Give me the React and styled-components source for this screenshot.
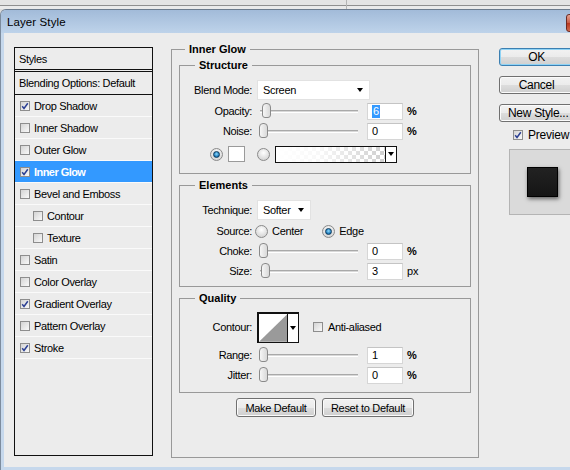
import React from 'react'
import styled, { createGlobalStyle } from 'styled-components'

const GlobalStyle = createGlobalStyle`
  html, body {
    margin: 0;
    padding: 0;
    background: #dcdcdc;
  }
  body {
    font-family: "Liberation Sans", Arial, sans-serif;
    font-size: 11px;
    color: #000;
  }
  * { box-sizing: border-box; }
`

const Page = styled.div`
  width: 570px;
  height: 470px;
  overflow: hidden;
  background: #dcdcdc;
`

const Backdrop = styled.div`
  height: 9px;
  background: linear-gradient(#e4e4e4 0, #e4e4e4 5px, #8f8f8f 5px, #8f8f8f 6px, #eaeaea 6px);
  display: flex;
`

const BackdropSplit = styled.div`
  width: 347px;
  border-right: 1px solid #b5b5b5;
`

const Window = styled.div`
  width: 610px;
  border-top: 1px solid #6c7b8d;
  border-left: 1px solid #7d8c9e;
  border-top-left-radius: 6px;
  overflow: hidden;
  background: #c6d8ec;
`

const TitleBar = styled.div`
  height: 23px;
  display: flex;
  align-items: center;
  justify-content: space-between;
  padding-left: 6px;
  background: linear-gradient(#a2bbd9, #bed3ea);
`

const Title = styled.span`
  font-size: 11.5px;
  color: #000;
  letter-spacing: 0.1px;
`

const CloseButton = styled.div`
  width: 43px;
  height: 18px;
  margin-right: 1px;
  margin-top: 2px;
  border: 1px solid #6d2a22;
  border-radius: 3px;
  background: linear-gradient(#e8a493, #c75a44 50%, #b8361f 51%, #d16b4e);
`

const Body = styled.div`
  height: 434px;
  margin-left: 3px;
  padding-left: 10px;
  display: flex;
  align-items: flex-start;
  background: #ececec;
`

const BottomEdge = styled.div`
  height: 3px;
  background: #c6d8ec;
`

/* ---------- left style list ---------- */

const StyleList = styled.div`
  margin-top: 14px;
  width: 139px;
  height: 409px;
  border: 1px solid #111;
  flex: none;
`

const HeadRow = styled.div`
  height: ${p => (p.$double ? 24 : 23)}px;
  padding-left: 4px;
  display: flex;
  align-items: center;
  border-bottom: ${p => (p.$double ? '3px double #111' : '1px solid #111')};
  letter-spacing: -0.35px;
`

const ListRow = styled.div`
  height: 22px;
  padding-left: ${p => (p.$indent ? 18 : 5)}px;
  display: flex;
  align-items: center;
  gap: 4px;
  border-bottom: 1px solid #fafafa;
  background: ${p => (p.$active ? '#3399ff' : 'transparent')};
  color: ${p => (p.$active ? '#fff' : '#000')};
  font-weight: ${p => (p.$active ? 'bold' : 'normal')};
  letter-spacing: ${p => (p.$active ? '-0.55px' : '-0.35px')};
`

const Box = styled.span`
  width: 10px;
  height: 10px;
  flex: none;
  border: 1px solid #8d8d8d;
  background: linear-gradient(135deg, #d4d4d4, #f9f9f9);
  display: flex;
  align-items: center;
  justify-content: center;
`

const Checkbox = ({ checked }) => (
  <Box>
    {checked && (
      <svg width="8" height="8" viewBox="0 0 8 8">
        <path d="M1.2 4.2 L3 6.4 L6.8 1.2" fill="none" stroke="#2b3f93" strokeWidth="1.5" />
      </svg>
    )}
  </Box>
)

/* ---------- fieldsets ---------- */

const Group = styled.fieldset`
  margin: 0;
  min-width: 0;
  border: 1px solid #999;
  padding: ${p => p.$pad};
  height: ${p => (p.$height ? `${p.$height}px` : 'auto')};
`

const Legend = styled.legend`
  padding: 0 4px;
  margin-left: ${p => p.$indent}px;
  line-height: 13px;
  font-weight: bold;
`

const MainGroup = styled(Group)`
  margin-top: 10px;
  margin-left: 18px;
  width: 308px;
  flex: none;
`

const SubGroup = styled(Group)`
  margin-top: ${p => p.$top}px;
`

const Row = styled.div`
  height: ${p => p.$h}px;
  display: grid;
  grid-template-columns: 72px auto;
  column-gap: 5px;
  align-items: center;
`

const Label = styled.span`
  text-align: right;
  letter-spacing: -0.35px;
`

const Controls = styled.div`
  display: flex;
  align-items: center;
  margin-left: ${p => p.$shift || 0}px;
`

const FreeRow = styled.div`
  height: ${p => p.$h}px;
  padding-left: 30px;
  display: flex;
  align-items: center;
`

const Select = styled.div`
  width: ${p => p.$w}px;
  height: 20px;
  padding: 0 6px 0 5px;
  background: #fff;
  border: 1px solid #e2e2e2;
  display: flex;
  align-items: center;
  justify-content: space-between;
  letter-spacing: -0.3px;
`

const Arrow = styled.span`
  width: 0;
  height: 0;
  border-left: 3.5px solid transparent;
  border-right: 3.5px solid transparent;
  border-top: 4px solid #000;
`

const Track = styled.div`
  position: relative;
  width: 98px;
  height: 3px;
  margin-left: 3px;
  border-top: 1px solid #a9a9a9;
  border-bottom: 1px solid #fff;
  background: #d8d8d8;
`

const Thumb = styled.span`
  position: absolute;
  top: -8px;
  width: 9px;
  height: 15px;
  border: 1px solid #8a8a8a;
  border-radius: 4px 4px 3px 3px;
  background: linear-gradient(90deg, #f6f6f6, #d9d9d9);
`

const Slider = ({ at }) => (
  <Track>
    <Thumb style={{ left: at }} />
  </Track>
)

const Field = styled.div`
  width: 36px;
  height: 17px;
  margin-left: 9px;
  padding-left: 4px;
  background: #fff;
  border: 1px solid #d6d6d6;
  border-top-color: #c4c4c4;
  display: flex;
  align-items: center;
`

const Picked = styled.span`
  background: #3399ff;
  color: #fff;
  padding: 0 1px;
  line-height: 13px;
`

const Unit = styled.span`
  margin-left: 4px;
  font-weight: ${p => (p.$bold ? 'bold' : 'normal')};
`

const RadioRing = styled.span`
  width: 13px;
  height: 13px;
  flex: none;
  border-radius: 50%;
  border: 1px solid #8a8a8a;
  background: radial-gradient(circle at 50% 35%, #ffffff, #d5d5d5 80%);
  display: flex;
  align-items: center;
  justify-content: center;
`

const RadioDot = styled.span`
  width: 7px;
  height: 7px;
  border-radius: 50%;
  border: 1px solid #0c3a5c;
  background: radial-gradient(circle at 50% 40%, #8fdcff, #1673b4 70%);
`

const Radio = ({ on }) => <RadioRing>{on && <RadioDot />}</RadioRing>

const RadioText = styled.span`
  margin-left: 4px;
  margin-right: ${p => p.$gap || 0}px;
  letter-spacing: -0.3px;
`

const Swatch = styled.span`
  width: 17px;
  height: 16px;
  margin: 0 12px 0 5px;
  background: #fff;
  border: 1px solid #9a9a9a;
`

const GradientPicker = styled.div`
  width: 122px;
  height: 17px;
  margin-left: 5px;
  border: 1px solid #111;
  display: flex;
`

const GradientFill = styled.div`
  flex: 1;
  background:
    linear-gradient(90deg, #fff 0%, rgba(255, 255, 255, 0.85) 40%, rgba(255, 255, 255, 0) 100%),
    repeating-conic-gradient(#cfcfcf 0 25%, #fff 0 50%) 0 0 / 8px 8px;
`

const ArrowCell = styled.div`
  width: 11px;
  border-left: 1px solid #111;
  background: #fff;
  display: flex;
  align-items: center;
  justify-content: center;
`

const ContourPicker = styled.div`
  width: 42px;
  height: 31px;
  border: 1px solid #111;
  border-top-width: 2px;
  border-left-width: 2px;
  display: flex;
  background: #fff;
`

const CheckLabel = styled.label`
  display: flex;
  align-items: center;
  gap: 5px;
  margin-left: 14px;
  letter-spacing: -0.35px;
`

const ButtonRow = styled.div`
  margin-top: 5px;
  display: flex;
  justify-content: center;
  gap: 6px;
`

const Button = styled.div`
  width: ${p => p.$w}px;
  height: ${p => p.$h || 19}px;
  border: 1px solid ${p => (p.$focus ? '#3c7fb1' : '#707070')};
  border-radius: 3px;
  background: linear-gradient(#f2f2f2, #ebebeb 50%, #dddddd 51%, #cfcfcf);
  box-shadow: ${p => (p.$focus ? 'inset 0 0 0 1px #8fd3f5' : 'inset 0 0 0 1px #fbfbfb')};
  display: flex;
  align-items: center;
  justify-content: ${p => (p.$left ? 'flex-start' : 'center')};
  padding-left: ${p => (p.$left ? 8 : 0)}px;
  font-size: ${p => p.$size || 11}px;
  letter-spacing: -0.3px;
  white-space: nowrap;
`

/* ---------- right column ---------- */

const Actions = styled.div`
  margin-top: 15px;
  margin-left: 20px;
  display: flex;
  flex-direction: column;
  gap: 10px;
  flex: none;
`

const PreviewToggle = styled.label`
  display: flex;
  align-items: center;
  gap: 5px;
  margin: -4px 0 0 14px;
  font-size: 12px;
  letter-spacing: -0.2px;
`

const PreviewBox = styled.div`
  width: 80px;
  height: 66px;
  margin-left: 10px;
  margin-top: -3px;
  border: 1px solid #b4b4b4;
  background: #dadada;
  padding: 17px 0 0 17px;
`

const PreviewSwatch = styled.div`
  width: 31px;
  height: 30px;
  border: 1px solid #000;
  background: linear-gradient(#222, #151515);
  box-shadow: 1px 2px 4px rgba(0, 0, 0, 0.55);
`

const styleItems = [
  { name: 'Drop Shadow', checked: true },
  { name: 'Inner Shadow' },
  { name: 'Outer Glow' },
  { name: 'Inner Glow', checked: true, active: true },
  { name: 'Bevel and Emboss' },
  { name: 'Contour', indent: true },
  { name: 'Texture', indent: true },
  { name: 'Satin' },
  { name: 'Color Overlay' },
  { name: 'Gradient Overlay', checked: true },
  { name: 'Pattern Overlay' },
  { name: 'Stroke', checked: true },
]

const SliderRow = ({ label, at, value, unit, picked }) => (
  <Row $h={20}>
    <Label>{label}</Label>
    <Controls>
      <Slider at={at} />
      <Field>{picked ? <Picked>{value}</Picked> : value}</Field>
      <Unit $bold={unit === '%'}>{unit}</Unit>
    </Controls>
  </Row>
)

const App = () => {
  return (
    <Page>
      <GlobalStyle />
      <Backdrop>
        <BackdropSplit />
      </Backdrop>
      <Window>
        <TitleBar>
          <Title>Layer Style</Title>
          <CloseButton />
        </TitleBar>
        <Body>
          <StyleList>
            <HeadRow $double>Styles</HeadRow>
            <HeadRow>Blending Options: Default</HeadRow>
            {styleItems.map(item => (
              <ListRow key={item.name} $indent={item.indent} $active={item.active}>
                <Checkbox checked={item.checked} />
                {item.name}
              </ListRow>
            ))}
          </StyleList>

          <MainGroup $pad="3px 7px 0 7px" $height={415}>
            <Legend $indent={6}>Inner Glow</Legend>

            <SubGroup $pad="7px 0 6px 0" $top={0}>
              <Legend $indent={15}>Structure</Legend>
              <Row $h={22}>
                <Label>Blend Mode:</Label>
                <Select $w={113}>
                  Screen
                  <Arrow />
                </Select>
              </Row>
              <SliderRow label="Opacity:" at={2} value="6" unit="%" picked />
              <SliderRow label="Noise:" at={-1} value="0" unit="%" />
              <FreeRow $h={26}>
                <Radio on />
                <Swatch />
                <Radio />
                <GradientPicker>
                  <GradientFill />
                  <ArrowCell>
                    <Arrow />
                  </ArrowCell>
                </GradientPicker>
              </FreeRow>
            </SubGroup>

            <SubGroup $pad="7px 0 5px 0" $top={5}>
              <Legend $indent={15}>Elements</Legend>
              <Row $h={22}>
                <Label>Technique:</Label>
                <Select $w={54}>
                  Softer
                  <Arrow />
                </Select>
              </Row>
              <Row $h={20}>
                <Label>Source:</Label>
                <Controls $shift={-2}>
                  <Radio />
                  <RadioText $gap={19}>Center</RadioText>
                  <Radio on />
                  <RadioText>Edge</RadioText>
                </Controls>
              </Row>
              <SliderRow label="Choke:" at={-1} value="0" unit="%" />
              <SliderRow label="Size:" at={1} value="3" unit="px" />
            </SubGroup>

            <SubGroup $pad="4px 0 7px 0" $top={5}>
              <Legend $indent={15}>Quality</Legend>
              <Row $h={36}>
                <Label>Contour:</Label>
                <Controls>
                  <ContourPicker>
                    <svg width="29" height="28" viewBox="0 0 29 28">
                      <polygon points="0,28 29,0 29,28" fill="#9a9a9a" />
                    </svg>
                    <ArrowCell>
                      <Arrow />
                    </ArrowCell>
                  </ContourPicker>
                  <CheckLabel>
                    <Checkbox />
                    Anti-aliased
                  </CheckLabel>
                </Controls>
              </Row>
              <SliderRow label="Range:" at={-1} value="1" unit="%" />
              <SliderRow label="Jitter:" at={-1} value="0" unit="%" />
            </SubGroup>

            <ButtonRow>
              <Button $w={80}>Make Default</Button>
              <Button $w={92}>Reset to Default</Button>
            </ButtonRow>
          </MainGroup>

          <Actions>
            <Button $w={75} $h={18} $focus $size={12}>OK</Button>
            <Button $w={75} $h={18} $size={12}>Cancel</Button>
            <Button $w={75} $h={18} $size={12} $left>New Style...</Button>
            <PreviewToggle>
              <Checkbox checked />
              Preview
            </PreviewToggle>
            <PreviewBox>
              <PreviewSwatch />
            </PreviewBox>
          </Actions>
        </Body>
        <BottomEdge />
      </Window>
    </Page>
  )
}

export default App
